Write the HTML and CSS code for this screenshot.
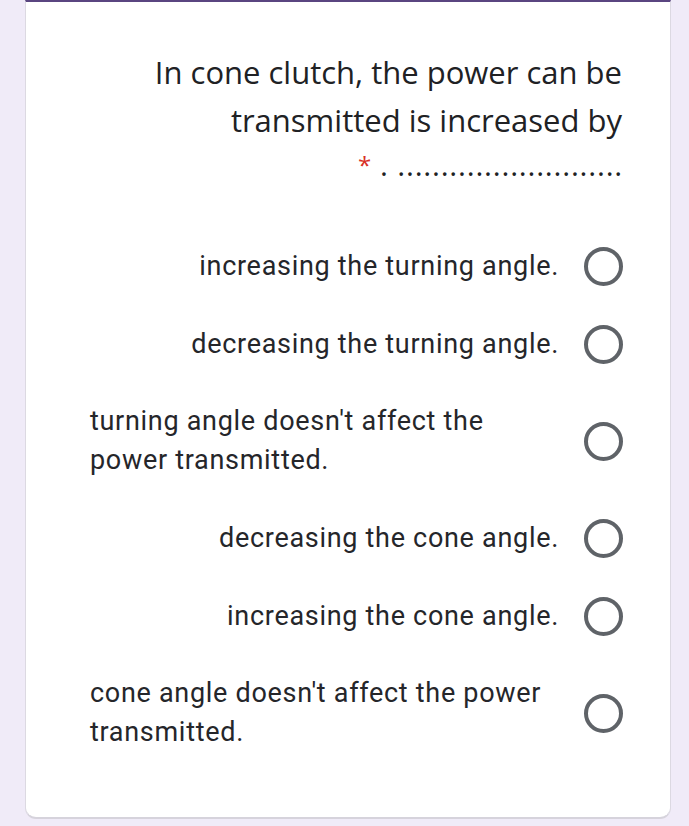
FILE: index.html
```html
<!DOCTYPE html>
<html lang="en">
<head>
<meta charset="utf-8">
<link rel="stylesheet" href="styles.css">
</head>
<body>
<div class="card">
  <div class="question">
    <div class="q-text">In cone clutch, the power can be transmitted is increased by</div>
    <div class="q-tail"><span class="req">*</span><span class="dots">. ..........................</span></div>
  </div>
  <div class="options">
    <div class="opt opt-single"><div class="label">increasing the turning angle.</div><span class="radio"></span></div>
    <div class="opt opt-single"><div class="label">decreasing the turning angle.</div><span class="radio"></span></div>
    <div class="opt"><div class="label">turning angle doesn't affect the power transmitted.</div><span class="radio"></span></div>
    <div class="opt opt-single"><div class="label">decreasing the cone angle.</div><span class="radio"></span></div>
    <div class="opt opt-single"><div class="label">increasing the cone angle.</div><span class="radio"></span></div>
    <div class="opt"><div class="label">cone angle doesn't affect the power transmitted.</div><span class="radio"></span></div>
  </div>
</div>
</body>
</html>
```
FILE: styles.css
```css
html, body {
  margin: 0;
  padding: 0;
  background: #f0ebf8;
}
body {
  width: 689px;
  height: 826px;
  overflow: hidden;
}
.card {
  margin: 0 18px 0 25px;
  height: 819px;
  box-sizing: border-box;
  background: #ffffff;
  border-top: 2px solid #5a4580;
  border-left: 1px solid #dcd9e2;
  border-right: 1px solid #dcd9e2;
  border-bottom: 2px solid #d6d3dc;
  border-radius: 0 0 11px 11px;
  padding: 46px 48px 0 64px;
}
.question {
  text-align: right;
  color: #202124;
  font-family: "Open Sans", "Noto Sans", sans-serif;
}
.q-text {
  font-size: 31px;
  line-height: 48px;
  padding-left: 40px;
}
.q-tail {
  height: 83px;
  line-height: 34px;
  font-size: 30px;
  letter-spacing: 0.8px;
  padding-top: 4px;
  box-sizing: border-box;
}
.req {
  color: #d93025;
  font-size: 24px;
  vertical-align: 2px;
  margin-right: 8px;
}
.dots {
  margin-right: -1px;
}
.opt {
  display: flex;
  justify-content: flex-end;
  align-items: center;
  padding: 19px 0;
}
.label {
  font-family: Roboto, "Noto Sans", sans-serif;
  font-size: 27px;
  line-height: 39px;
  letter-spacing: 0.7px;
  color: #25262a;
  text-align: left;
  flex: 0 1 auto;
  min-width: 0;
}
.opt-single .label {
  line-height: 40px;
}
.radio {
  flex: none;
  width: 31px;
  height: 31px;
  border: 4px solid #5f6368;
  border-radius: 50%;
  margin-left: 25px;
  margin-right: -1px;
}
```
